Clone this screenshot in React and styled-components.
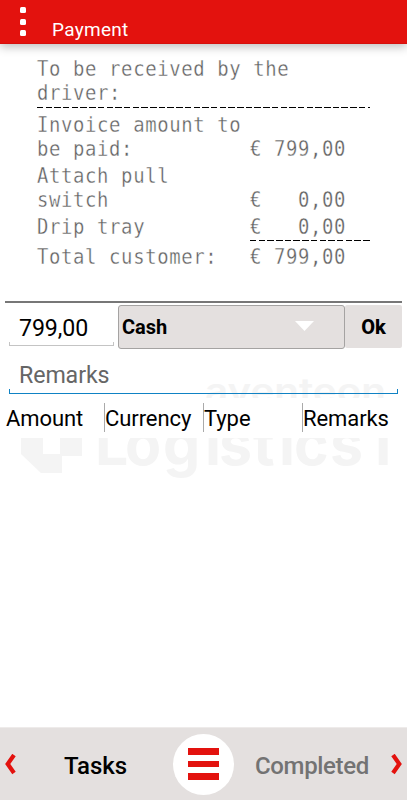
import React from "react";
import styled, { createGlobalStyle } from "styled-components";

const Global = createGlobalStyle`
  * { box-sizing: border-box; }
  body { margin: 0; background: #fff; font-family: Roboto, "Liberation Sans", sans-serif; color: #000; }
`;

const Screen = styled.div`
  position: relative;
  width: 407px;
  height: 800px;
  display: flex;
  flex-direction: column;
  overflow: hidden;
  isolation: isolate;
`;

const AppBar = styled.header`
  height: 44px;
  flex: none;
  display: flex;
  background: #e3120e;
  color: #fff;
  border-bottom: 1px solid #d5100c;
  box-shadow: 0 3px 9px rgba(0, 0, 0, 0.25);
`;

const Dots = styled.div`
  width: 52px;
  padding: 7px 0 0 20px;
  display: flex;
  flex-direction: column;
  gap: 5.5px;
`;

const Dot = styled.span`
  width: 6px;
  height: 6px;
  border-radius: 1.5px;
  background: #fff;
`;

const Title = styled.h1`
  margin: 0;
  padding-top: 18px;
  font-size: 19px;
  line-height: 24px;
  font-weight: 400;
  letter-spacing: 0.3px;
`;

const Receipt = styled.section`
  height: 257px;
  flex: none;
  padding: 13px 37px 0;
  font-family: "DejaVu Sans Mono", monospace;
  font-size: 21px;
  line-height: 24px;
  letter-spacing: 0.71px;
  color: #606060;
  -webkit-text-stroke: 0.35px #fff;
`;

const Line = styled.div`
  display: grid;
  grid-template-columns: 213px 1fr;
  align-items: end;
  white-space: pre;
  margin-bottom: ${(p) => p.$gap || 0}px;
`;

const Mono = styled.span`
  transform: scaleX(0.9);
  transform-origin: left;
`;

const Dashes = styled.div`
  height: 1px;
  width: ${(p) => p.$w}px;
  margin-left: auto;
  margin-bottom: ${(p) => p.$gap}px;
  background: repeating-linear-gradient(90deg, #000 0 6.4px, transparent 6.4px 8.7px);
`;

const PayRow = styled.div`
  height: 49px;
  flex: none;
  margin: 0 5px;
  padding: 2px 0 0 4px;
  border-top: 2px solid #777;
  display: flex;
`;

const Field = styled.div`
  width: ${(p) => p.$w}px;
  height: ${(p) => p.$h}px;
  display: flex;
  flex-direction: column;
  justify-content: flex-end;
  color: ${(p) => p.$color};
  font-size: 23.2px;
  line-height: 28px;
`;

const FieldText = styled.span`
  padding-left: 10px;
  letter-spacing: -0.1px;
`;

const Underline = styled.div`
  height: ${(p) => p.$h}px;
  border-style: solid;
  border-width: 0 1px 1px;
  border-color: ${(p) => p.$line};
`;

const Select = styled.button`
  width: 227px;
  height: 44px;
  margin-left: 4px;
  padding: 0 30px 0 3px;
  display: flex;
  align-items: center;
  justify-content: space-between;
  border: 1px solid #a5a3a2;
  border-radius: 3px;
  background: #e4e0df;
  font: 700 20px Roboto, sans-serif;
  color: #000;
`;

const OkButton = styled.button`
  width: 57px;
  height: 43px;
  border: 0;
  border-radius: 2px;
  background: #e4e0df;
  font: 800 20px Roboto, sans-serif;
  color: #000;
`;

const Caret = styled.svg`
  margin-bottom: 2px;
`;

const Remarks = styled.div`
  flex: none;
  padding-left: 9px;
`;

const TableHead = styled.div`
  height: 40px;
  flex: none;
  margin-top: 4px;
  padding: 5px 0 0 5px;
  display: grid;
  grid-template-columns: 99px 99px 99px 1fr;
  align-items: start;
  background: #fff;
  font-size: 22px;
  line-height: 32px;
  letter-spacing: -0.08px;
`;

const HeadCell = styled.span`
  height: 29px;
  padding-left: ${(p) => (p.$first ? 1 : 0)}px;
  border-left: ${(p) => (p.$first ? 0 : "1px solid #aaa")};
`;

const Watermark = styled.svg`
  position: absolute;
  left: 0;
  top: 370px;
  z-index: -1;
`;

const Footer = styled.footer`
  height: 73px;
  flex: none;
  margin-top: auto;
  padding: 0 4px;
  display: grid;
  grid-template-columns: 46px 123px 61px 156.5px 1fr;
  align-items: center;
  background: #e4e0df;
  border-top: 1px solid #eeebea;
`;

const NavLabel = styled.span`
  padding: 3px 0 0 ${(p) => p.$left}px;
  font-size: 24px;
  font-weight: 500;
  letter-spacing: ${(p) => p.$ls || 0}px;
  color: ${(p) => p.$color};
`;

const Menu = styled.div`
  width: 61px;
  height: 61px;
  border-radius: 50%;
  background: #fff;
  display: flex;
  flex-direction: column;
  align-items: center;
  justify-content: center;
  gap: 5.5px;
`;

const Bar = styled.span`
  width: 31px;
  height: 6.7px;
  background: #e3120e;
`;

const Chevron = ({ right }) => (
  <svg width="12" height="21" viewBox="0 0 12 21">
    <path d={right ? "M2 1 8.3 10 2 19" : "M10 1 3.7 10 10 19"} fill="none" stroke="#e3120e" strokeWidth="4.2" />
  </svg>
);

export default function App() {
  return (
    <Screen>
      <Global />
      <Watermark width="407" height="120" viewBox="0 370 407 120" fill="#f4f4f4">
        <text x="205" y="403" textLength="181" lengthAdjust="spacingAndGlyphs" fontFamily="Inter" fontWeight="600" fontSize="35">aventeon</text>
        <path d="M21 424H43V454H60V424H82V456H62V473H41L21 454Z" />
        <text x="95 125 163 205 219 253 279 294 330 366" y="465" fontFamily="Inter" fontWeight="700" fontSize="59">Logistics1</text>
      </Watermark>
      <AppBar>
        <Dots><Dot /><Dot /><Dot /></Dots>
        <Title>Payment</Title>
      </AppBar>
      <Receipt>
        <Line $gap={2}><Mono>{"To be received by the\ndriver:"}</Mono></Line>
        <Dashes $w={333} $gap={5} />
        <Line $gap={3}><Mono>{"Invoice amount to\nbe paid:"}</Mono><Mono>€ 799,00</Mono></Line>
        <Line $gap={3}><Mono>{"Attach pull\nswitch"}</Mono><Mono>{"€   0,00"}</Mono></Line>
        <Line $gap={1}><Mono>Drip tray</Mono><Mono>{"€   0,00"}</Mono></Line>
        <Dashes $w={120} $gap={4} />
        <Line><Mono>Total customer:</Mono><Mono>€ 799,00</Mono></Line>
      </Receipt>
      <PayRow>
        <Field $w={105} $h={41} $color="#000">
          <FieldText>799,00</FieldText>
          <Underline $h={4} $line="#c4c4c4" />
        </Field>
        <Select>
          Cash
          <Caret width="19" height="10" viewBox="0 0 19 10"><path d="M0 0H19L9.5 10Z" fill="#fff" /></Caret>
        </Select>
        <OkButton>Ok</OkButton>
      </PayRow>
      <Remarks>
        <Field $w={389} $h={44} $color="#666">
          <FieldText>Remarks</FieldText>
          <Underline $h={5} $line="#0f82c4" />
        </Field>
      </Remarks>
      <TableHead>
        <HeadCell $first>Amount</HeadCell>
        <HeadCell>Currency</HeadCell>
        <HeadCell>Type</HeadCell>
        <HeadCell>Remarks</HeadCell>
      </TableHead>
      <Footer>
        <Chevron />
        <NavLabel $left={14} $color="#000">Tasks</NavLabel>
        <Menu><Bar /><Bar /><Bar /></Menu>
        <NavLabel $left={21} $ls={-0.35} $color="#737373">Completed</NavLabel>
        <Chevron right />
      </Footer>
    </Screen>
  );
}
